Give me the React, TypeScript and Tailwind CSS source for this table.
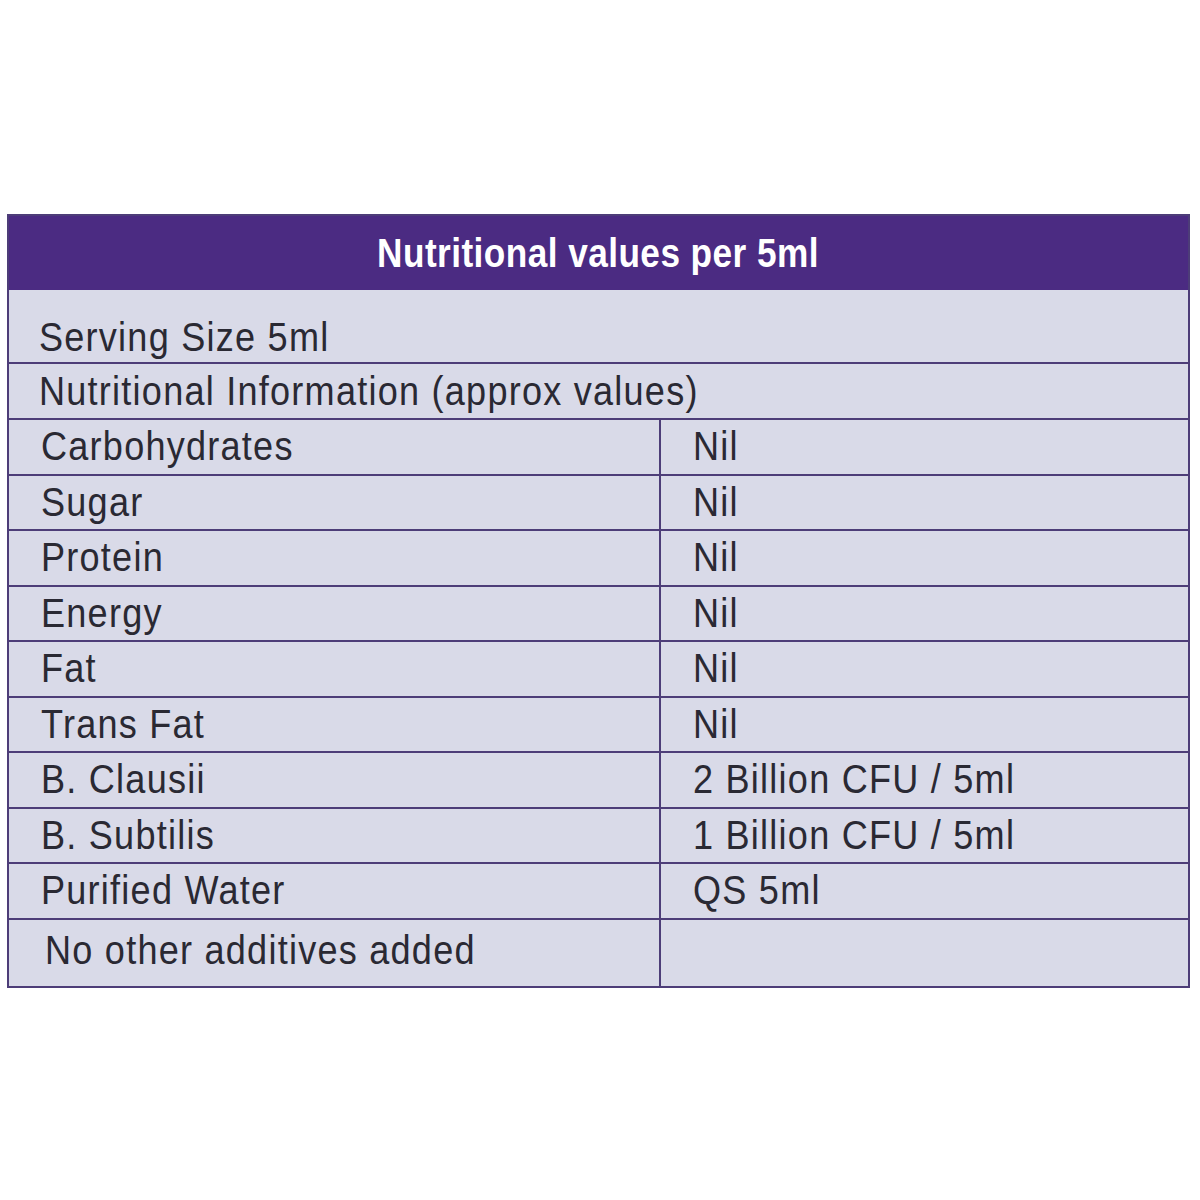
import React from 'react';

const rows: [string, string][] = [
  ['Carbohydrates', 'Nil'],
  ['Sugar', 'Nil'],
  ['Protein', 'Nil'],
  ['Energy', 'Nil'],
  ['Fat', 'Nil'],
  ['Trans Fat', 'Nil'],
  ['B. Clausii', '2 Billion CFU / 5ml'],
  ['B. Subtilis', '1 Billion CFU / 5ml'],
  ['Purified Water', 'QS 5ml'],
];

const font = { fontFamily: '"Liberation Sans", Arial, sans-serif' };

// condensed print type: squeeze the regular face horizontally
const txt = 'inline-block origin-left scale-x-[0.88] text-[41px] leading-none tracking-[1.4px] whitespace-nowrap';

export default function App() {
  return (
    <div className="w-[1200px] h-[1200px] bg-white pt-[214px] pl-[7px]" style={font}>
      <div className="w-[1183px] border-2 border-[#4d3d78] bg-[#d9dae8] text-[#2a2933]">
        <div className="h-[74px] bg-[#4b2b82] flex items-center justify-center">
          <span className="inline-block origin-center scale-x-[0.88] text-white font-bold text-[40px] tracking-[0.5px] leading-none">
            Nutritional values per 5ml
          </span>
        </div>
        <div className="h-[74px] border-b-2 border-[#4d3d78] flex items-end pb-[4px] pl-[30px]">
          <span className={txt}>Serving Size 5ml</span>
        </div>
        <div className="h-[56px] border-b-2 border-[#4d3d78] flex items-center pl-[30px]">
          <span className={txt}>Nutritional Information (approx values)</span>
        </div>
        {rows.map(([label, value]) => (
          <div key={label} className="h-[55.5px] border-b-2 border-[#4d3d78] grid grid-cols-[652px_1fr]">
            <div className="border-r-2 border-[#4d3d78] flex items-center pl-[32px]">
              <span className={txt}>{label}</span>
            </div>
            <div className="flex items-center pl-[32px]">
              <span className={txt}>{value}</span>
            </div>
          </div>
        ))}
        <div className="h-[66px] grid grid-cols-[652px_1fr]">
          <div className="border-r-2 border-[#4d3d78] flex items-start pt-[10px] pl-[36px]">
            <span className={txt}>No other additives added</span>
          </div>
          <div />
        </div>
      </div>
    </div>
  );
}
